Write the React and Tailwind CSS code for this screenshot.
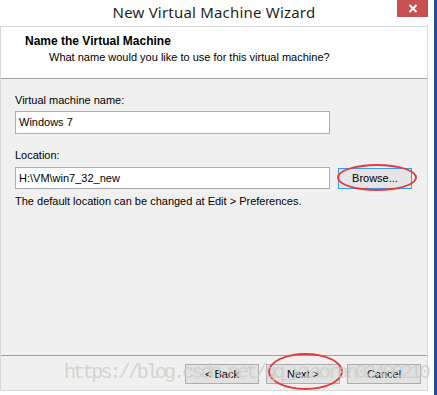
import React from "react"

const ui = { fontFamily: '"Liberation Sans", Arial, sans-serif' }

function WinButton({ children, focused }) {
  return (
    <button
      className={
        focused
          ? "w-[74px] h-[21px] border border-[#3399ff] bg-[#e5e5e5] text-[11px] text-black leading-none"
          : "w-[74px] h-[20px] border border-[#adadad] bg-[#e1e1e1] text-[11px] text-black leading-none"
      }
      style={ui}>
      {children}
    </button>
  )
}

export default function App() {
  return (
    <div className="relative w-[437px] h-[395px] bg-white overflow-hidden flex" style={ui}>
      {/* wizard window */}
      <div className="w-[434px] h-full flex flex-col">
        {/* title bar */}
        <div className="h-[26px] flex items-start">
          <div className="flex-1 flex justify-center pt-[3px] pl-[31px]">
            <span className="text-[15px] text-[#1f1f1f] leading-[18px] tracking-[0.2px]"
              style={{ fontFamily: '"Noto Sans", "Open Sans", sans-serif' }}>
              New Virtual Machine Wizard
            </span>
          </div>
          <div className="w-[31px] h-[17px] bg-[#c75050] flex items-center justify-center mr-[6px]">
            <svg width="10" height="9" viewBox="0 0 10 9">
              <path d="M1.5 1 L8.5 8 M8.5 1 L1.5 8" stroke="white" strokeWidth="2" />
            </svg>
          </div>
        </div>

        {/* client area */}
        <div className="w-[428px] h-[365px] border border-[#d9d9d9] flex flex-col">
          {/* header */}
          <div className="h-[52px] bg-white pt-[7px] pl-[24px] border-b border-[#a0a0a0]">
            <p className="text-[12px] font-bold leading-[15px] text-black">
              Name the Virtual Machine
            </p>
            <p className="text-[11px] leading-[15px] text-black pl-[24px] mt-[1px]">
              What name would you like to use for this virtual machine?
            </p>
          </div>

          {/* body */}
          <div className="flex-1 bg-[#f0f0f0] pt-[14px] pl-[14px] border-b border-[#a0a0a0]">
            <p className="text-[11px] leading-[15px] text-black">Virtual machine name:</p>
            <div className="mt-[3px] w-[315px] h-[23px] bg-white border border-[#abadb3] flex items-center pl-[3px]">
              <span className="text-[11px] text-black">Windows 7</span>
            </div>

            <p className="mt-[14px] text-[11px] leading-[15px] text-black">Location:</p>
            <div className="mt-[4px] flex items-center gap-[8px]">
              <div className="w-[315px] h-[22px] bg-white border border-[#abadb3] flex items-center pl-[3px]">
                <span className="text-[11px] text-black">H:\VM\win7_32_new</span>
              </div>
              <WinButton focused>Browse...</WinButton>
            </div>
            <p className="mt-[5px] text-[11px] leading-[15px] text-black">
              The default location can be changed at Edit &gt; Preferences.
            </p>
          </div>

          {/* footer */}
          <div className="h-[34px] bg-[#f0f0f0] flex justify-end items-start pt-[8px] pr-[6px] gap-[7px]">
            <WinButton>&lt; Back</WinButton>
            <WinButton>Next &gt;</WinButton>
            <WinButton>Cancel</WinButton>
          </div>
        </div>
      </div>

      {/* desktop behind */}
      <div className="w-[3px] h-full bg-[#1f4f8f]" />

      {/* red annotations */}
      <div className="absolute left-[337px] top-[164px] w-[80px] h-[27px] rounded-[50%] border-2 border-[#e8393a] pointer-events-none" />
      <div className="absolute left-[268px] top-[353px] w-[75px] h-[37px] rounded-[50%] border-2 border-[#e8393a] pointer-events-none" />

      {/* watermark */}
      <div className="absolute left-[64px] top-[361px] text-[20px] leading-[24px] text-[#cdcdc5]/80 whitespace-nowrap pointer-events-none tracking-[-2.9px]"
        style={{ fontFamily: '"Liberation Mono", monospace' }}>
        https://blog.csdn.net/qq_xiaoran02400210
      </div>
    </div>
  )
}
